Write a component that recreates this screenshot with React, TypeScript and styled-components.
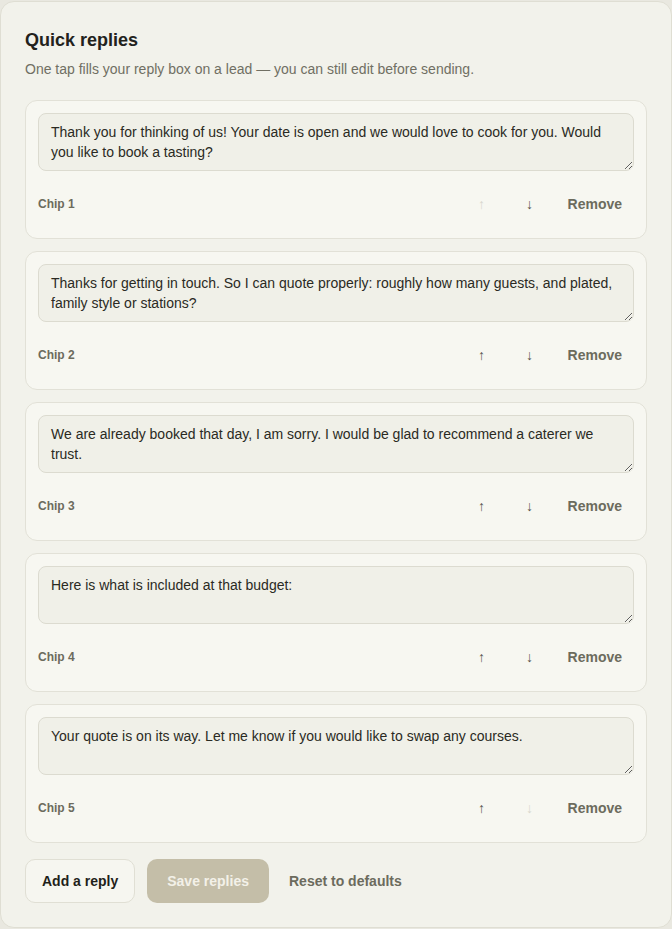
import * as React from 'react';
import styled, { createGlobalStyle } from 'styled-components';

const GlobalStyle = createGlobalStyle`
    html, body {
        margin: 0;
        padding: 0;
        background: #e9e8e0;
        font-family: "Liberation Sans", Arial, sans-serif;
    }
`;

const Panel = styled.section`
    margin-top: 1px;
    box-sizing: border-box;
    width: 672px;
    padding: 24px;
    background: #f2f2eb;
    border: 1px solid #dfded3;
    border-radius: 14px;
`;

const Title = styled.h2`
    margin: 0;
    font-size: 18px;
    line-height: 28px;
    font-weight: 700;
    color: #22221c;
`;

const Subtitle = styled.p`
    margin: 5px 0 0;
    font-size: 14px;
    line-height: 20px;
    color: #706f63;
`;

const ChipList = styled.div`
    display: flex;
    flex-direction: column;
    gap: 12px;
    margin-top: 21px;
`;

const ChipCard = styled.div`
    display: flex;
    flex-direction: column;
    gap: 11px;
    padding: 12px;
    background: #f7f7f1;
    border: 1px solid #e2e1d7;
    border-radius: 12px;
`;

const ReplyText = styled.textarea`
    box-sizing: border-box;
    display: block;
    width: 100%;
    height: 58px;
    margin: 0;
    padding: 8px 12px;
    font-family: inherit;
    font-size: 14px;
    line-height: 20px;
    color: #2a2a23;
    background: #f0f0e8;
    border: 1px solid #dcdbd0;
    border-radius: 8px;
    outline: none;
    resize: vertical;
`;

const ChipRow = styled.div`
    display: flex;
    align-items: center;
    height: 44px;
`;

const ChipLabel = styled.span`
    flex: 1;
    font-size: 12px;
    font-weight: 700;
    color: #6c6b5d;
`;

const ArrowButton = styled.button`
    width: 44px;
    height: 44px;
    margin-left: 4px;
    padding: 0;
    border: none;
    background: transparent;
    font-family: inherit;
    font-size: 14px;
    color: #55544a;
    cursor: pointer;

    &:disabled {
        color: #d9d8ce;
        cursor: default;
    }
`;

const RemoveButton = styled.button`
    height: 44px;
    margin-left: 4px;
    padding: 0 12px;
    border: none;
    background: transparent;
    font-family: inherit;
    font-size: 14px;
    font-weight: 700;
    color: #6c6b5d;
    cursor: pointer;
`;

const Footer = styled.div`
    display: flex;
    align-items: center;
    gap: 12px;
    margin-top: 16px;
`;

const FooterButton = styled.button<{ $variant: 'outline' | 'primary' | 'text' }>`
    height: 44px;
    box-sizing: border-box;
    padding: ${(p) => (p.$variant === 'outline' ? '0 16px' : p.$variant === 'primary' ? '0 19px' : '0 7px')};
    font-family: inherit;
    font-size: 14px;
    font-weight: 700;
    border-radius: 10px;
    cursor: pointer;
    border: 1px solid ${(p) => (p.$variant === 'outline' ? '#e0dfd4' : 'transparent')};
    background: ${(p) => (p.$variant === 'outline' ? '#f6f6f0' : p.$variant === 'primary' ? '#c4bea8' : 'transparent')};
    color: ${(p) => (p.$variant === 'outline' ? '#1f1f1a' : p.$variant === 'primary' ? '#f3f1e8' : '#6c6b5d')};

    &:disabled {
        cursor: default;
    }
`;

const DEFAULTS = [
    'Thank you for thinking of us! Your date is open and we would love to cook for you. Would you like to book a tasting?',
    'Thanks for getting in touch. So I can quote properly: roughly how many guests, and plated, family style or stations?',
    'We are already booked that day, I am sorry. I would be glad to recommend a caterer we trust.',
    'Here is what is included at that budget:',
    'Your quote is on its way. Let me know if you would like to swap any courses.',
];

export default function App() {
    const [replies, setReplies] = React.useState<string[]>(DEFAULTS);
    const [dirty, setDirty] = React.useState(false);

    const update = (next: string[]) => {
        setReplies(next);
        setDirty(true);
    };

    const move = (i: number, dir: number) => {
        const next = [...replies];
        const tmp = next[i];
        next[i] = next[i + dir];
        next[i + dir] = tmp;
        update(next);
    };

    return (
        <>
            <GlobalStyle />
            <Panel>
                <Title>Quick replies</Title>
                <Subtitle>One tap fills your reply box on a lead — you can still edit before sending.</Subtitle>
                <ChipList>
                    {replies.map((text, i) => (
                        <ChipCard key={i}>
                            <ReplyText
                                value={text}
                                onChange={(e) => {
                                    const next = [...replies];
                                    next[i] = e.currentTarget.value;
                                    update(next);
                                }}
                            />
                            <ChipRow>
                                <ChipLabel>Chip {i + 1}</ChipLabel>
                                <ArrowButton disabled={i === 0} onClick={() => move(i, -1)} aria-label="Move up">
                                    ↑
                                </ArrowButton>
                                <ArrowButton
                                    disabled={i === replies.length - 1}
                                    onClick={() => move(i, 1)}
                                    aria-label="Move down"
                                >
                                    ↓
                                </ArrowButton>
                                <RemoveButton onClick={() => update(replies.filter((_, j) => j !== i))}>
                                    Remove
                                </RemoveButton>
                            </ChipRow>
                        </ChipCard>
                    ))}
                </ChipList>
                <Footer>
                    <FooterButton $variant="outline" onClick={() => update([...replies, ''])}>
                        Add a reply
                    </FooterButton>
                    <FooterButton $variant="primary" disabled={!dirty} onClick={() => setDirty(false)}>
                        Save replies
                    </FooterButton>
                    <FooterButton
                        $variant="text"
                        onClick={() => {
                            setReplies(DEFAULTS);
                            setDirty(false);
                        }}
                    >
                        Reset to defaults
                    </FooterButton>
                </Footer>
            </Panel>
        </>
    );
}
